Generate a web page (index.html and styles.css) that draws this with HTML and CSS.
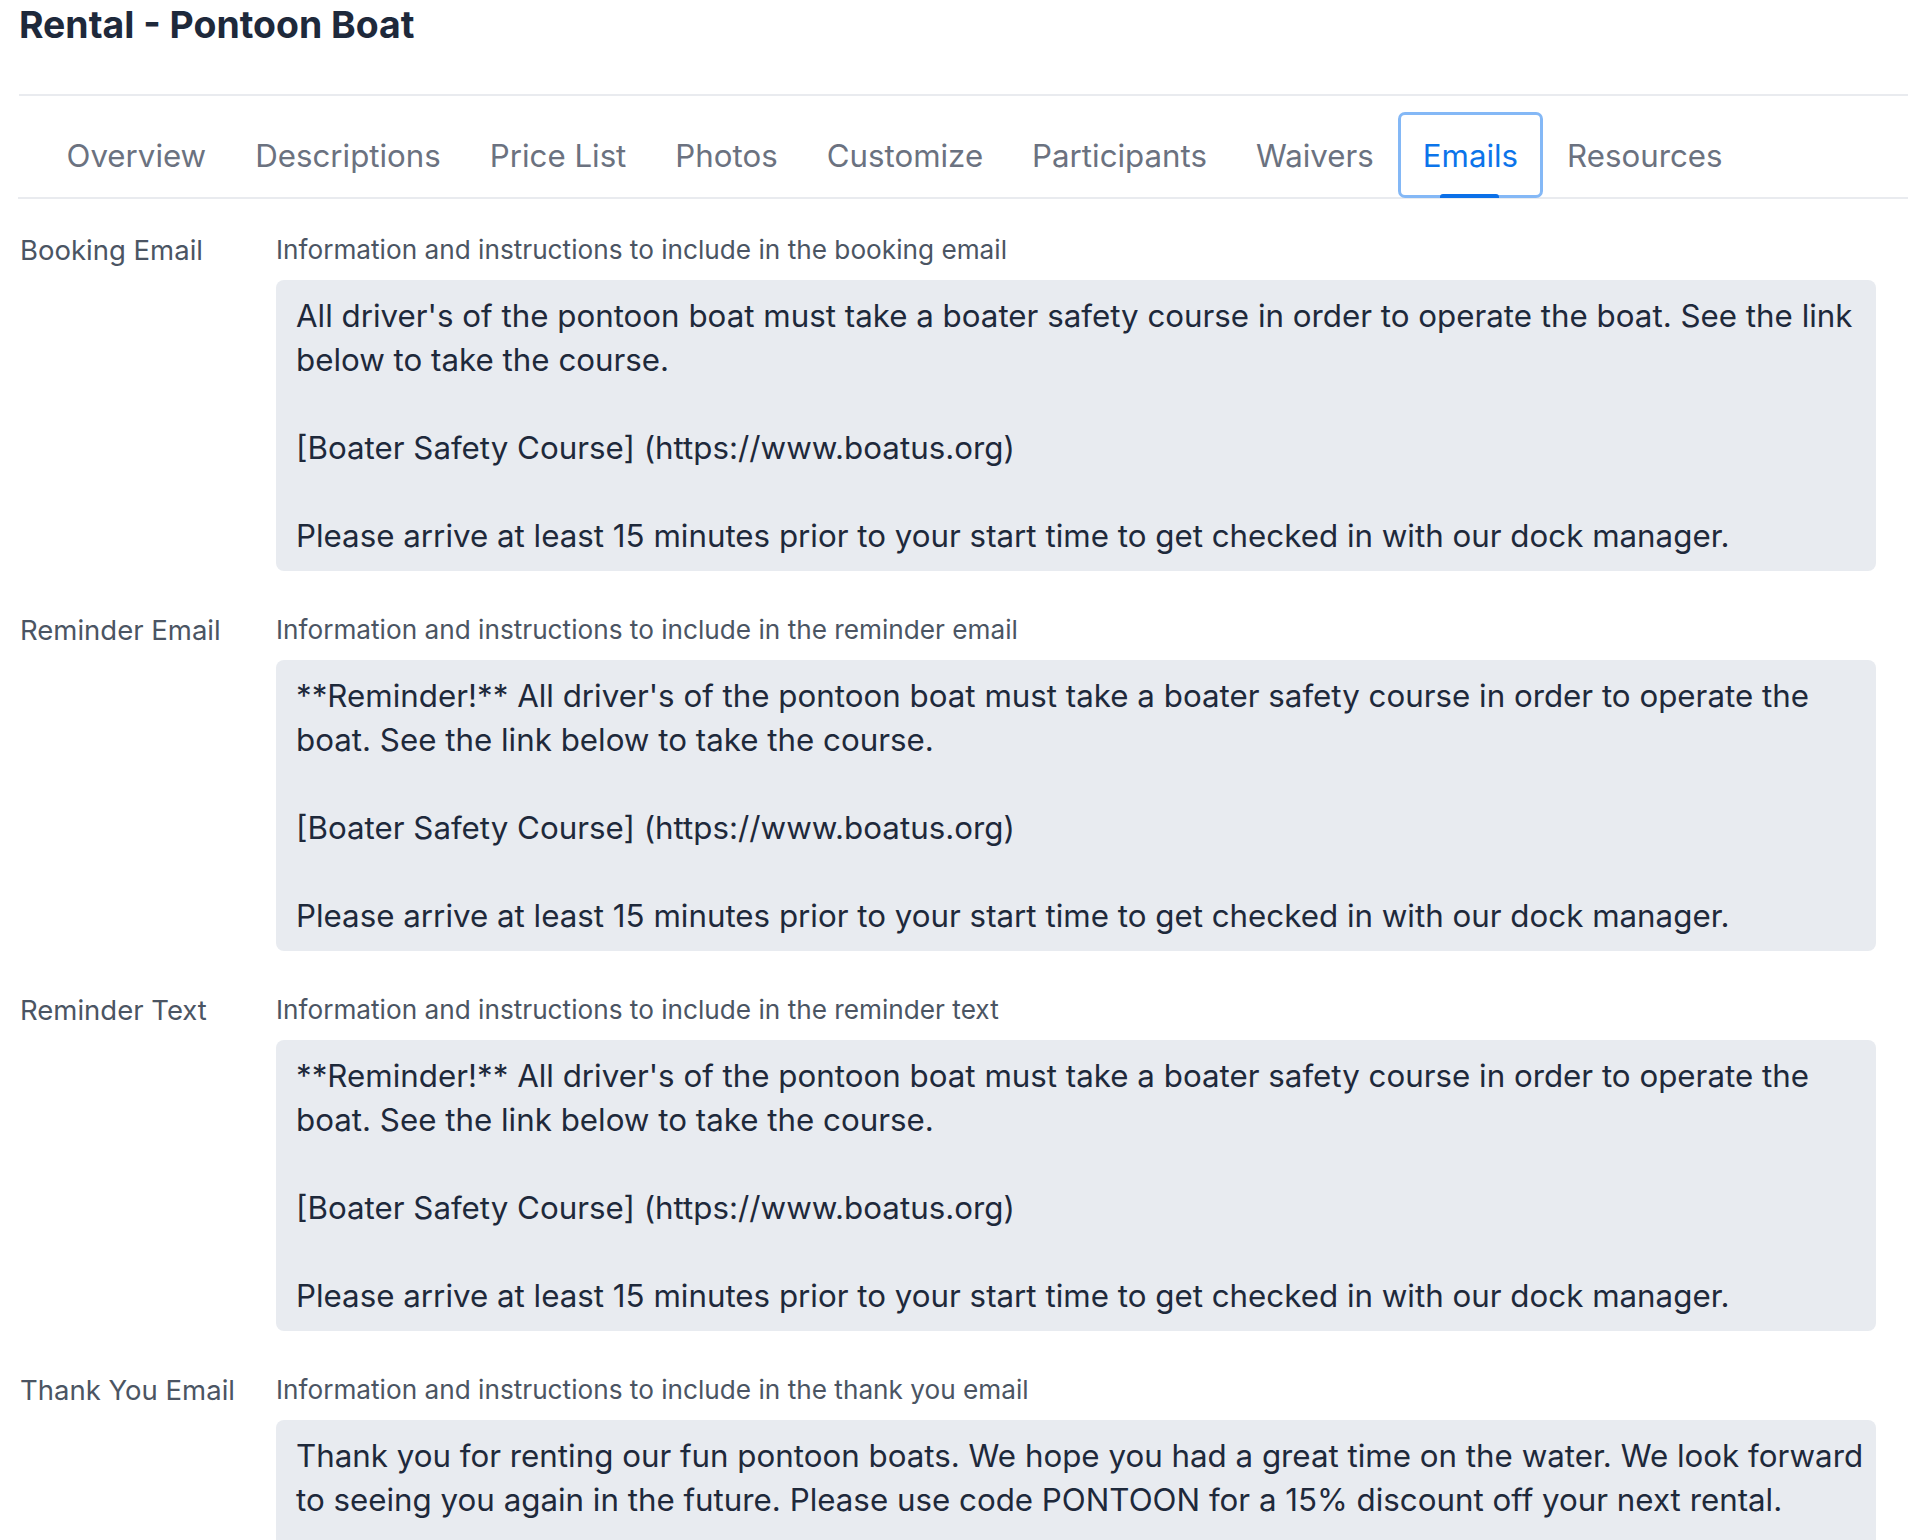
FILE: index.html
```html
<!DOCTYPE html>
<html lang="en">
<head>
  <meta charset="UTF-8" />
  <title>Rental - Pontoon Boat</title>
  <meta name="viewport" content="width=device-width, initial-scale=1.0" />
  <link rel="stylesheet" href="styles.css">
</head>
<body>
  <div class="page">
    <h1 class="page-title">Rental - Pontoon Boat</h1>

    <nav class="tabs">
      <a class="tab" href="#">Overview</a>
      <a class="tab" href="#">Descriptions</a>
      <a class="tab" href="#">Price List</a>
      <a class="tab" href="#">Photos</a>
      <a class="tab" href="#">Customize</a>
      <a class="tab" href="#">Participants</a>
      <a class="tab" href="#">Waivers</a>
      <a class="tab active" href="#">Emails</a>
      <a class="tab" href="#">Resources</a>
    </nav>

    <div class="emails">
      <div class="field">
        <div class="field-label">Booking Email</div>
        <div class="field-body">
          <div class="field-help">Information and instructions to include in the booking email</div>
          <div class="field-text">All driver's of the pontoon boat must take a boater safety course in order to operate the boat. See the link below to take the course.

[Boater Safety Course] (https://www.boatus.org)

Please arrive at least 15 minutes prior to your start time to get checked in with our dock manager.</div>
        </div>
      </div>

      <div class="field">
        <div class="field-label">Reminder Email</div>
        <div class="field-body">
          <div class="field-help">Information and instructions to include in the reminder email</div>
          <div class="field-text">**Reminder!** All driver's of the pontoon boat must take a boater safety course in order to operate the boat. See the link below to take the course.

[Boater Safety Course] (https://www.boatus.org)

Please arrive at least 15 minutes prior to your start time to get checked in with our dock manager.</div>
        </div>
      </div>

      <div class="field">
        <div class="field-label">Reminder Text</div>
        <div class="field-body">
          <div class="field-help">Information and instructions to include in the reminder text</div>
          <div class="field-text">**Reminder!** All driver's of the pontoon boat must take a boater safety course in order to operate the boat. See the link below to take the course.

[Boater Safety Course] (https://www.boatus.org)

Please arrive at least 15 minutes prior to your start time to get checked in with our dock manager.</div>
        </div>
      </div>

      <div class="field">
        <div class="field-label">Thank You Email</div>
        <div class="field-body">
          <div class="field-help">Information and instructions to include in the thank you email</div>
          <div class="field-text">Thank you for renting our fun pontoon boats. We hope you had a great time on the water. We look forward to seeing you again in the future. Please use code PONTOON for a 15% discount off your next rental.</div>
        </div>
      </div>
    </div>
  </div>
</body>
</html>
```

FILE: styles.css
```css
body {
  font-family: Inter, "Noto Sans", sans-serif;
  background: white;
  margin: 0;
  color: #1e293b;
}

.page {
  padding-left: 18px;
}

.page-title {
  margin: 3px 0 0 1px;
  font-size: 37.4px;
  line-height: 44px;
  font-weight: 700;
  color: #1e293b;
  padding-bottom: 47px;
  border-bottom: 2px solid #e9ebef;
}

.tabs {
  display: flex;
  padding: 16px 0 0 24px;
  border-bottom: 2px solid #e9ebef;
}

.tab {
  position: relative;
  display: flex;
  align-items: center;
  height: 86px;
  box-sizing: border-box;
  padding: 2px 21.5px 0;
  margin-bottom: -1px;
  border: 3px solid transparent;
  border-radius: 7px;
  font-size: 31.25px;
  color: #6b7280;
  text-decoration: none;
}

.tab.active {
  color: #0b74ea;
  border-color: #84b8f6;
}

.tab.active::after {
  content: "";
  position: absolute;
  left: 39px;
  right: 41px;
  bottom: -3px;
  height: 4px;
  border-radius: 3px 3px 0 0;
  background: #0b70e8;
}

.emails {
  padding: 34px 32px 0 2px;
}

.field {
  display: grid;
  grid-template-columns: 256px 1fr;
  margin-bottom: 42px;
}

.field-label {
  font-size: 27.5px;
  line-height: 34px;
  color: #4b5563;
}

.field-help {
  font-size: 26.2px;
  line-height: 34px;
  color: #4b5563;
  margin-bottom: 13px;
}

.field-text {
  background: #e8ebf0;
  border-radius: 8px;
  padding: 14px 8px 13px 20px;
  min-height: 264px;
  font-size: 31.3px;
  line-height: 44px;
  color: #1e293b;
  white-space: pre-wrap;
}
```
